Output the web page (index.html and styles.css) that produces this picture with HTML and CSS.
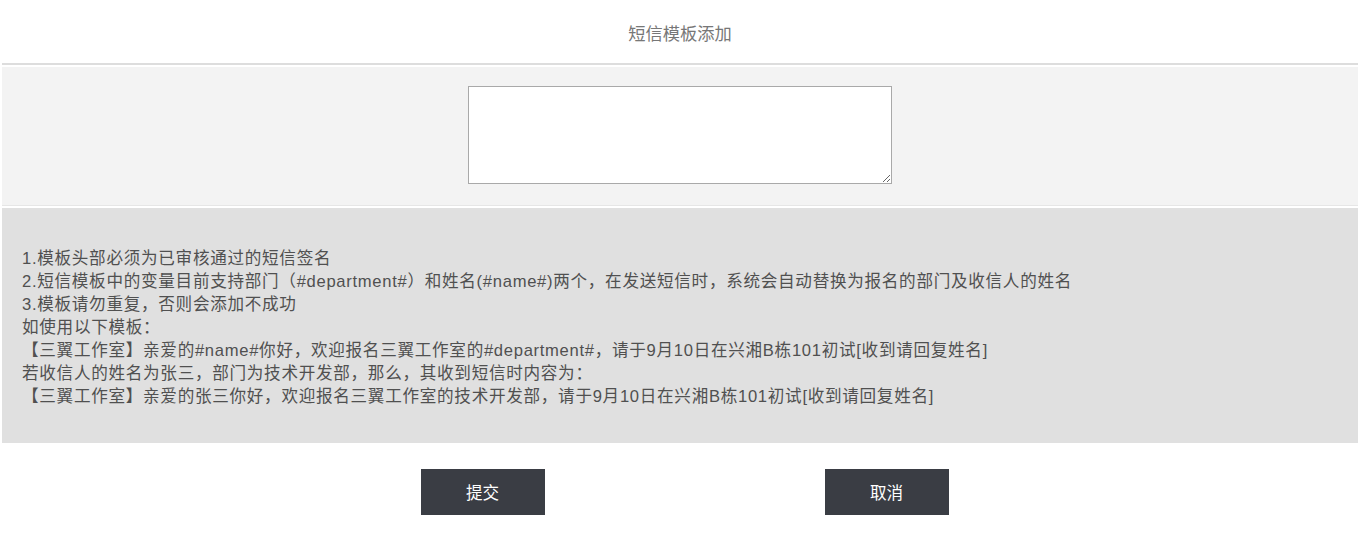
FILE: index.html
```html
<!DOCTYPE html>
<html lang="zh">
<head>
<meta charset="utf-8">
<title>短信模板添加</title>
<link rel="stylesheet" href="styles.css">
</head>
<body>
<div class="page">
  <header class="title-bar">
    <h1 class="title">短信模板添加</h1>
  </header>
  <section class="editor">
    <textarea class="tpl-input"></textarea>
  </section>
  <section class="notes">
    <p>1.模板头部必须为已审核通过的短信签名</p>
    <p>2.短信模板中的变量目前支持部门（#department#）和姓名(#name#)两个，在发送短信时，系统会自动替换为报名的部门及收信人的姓名</p>
    <p>3.模板请勿重复，否则会添加不成功</p>
    <p>如使用以下模板：</p>
    <p>【三翼工作室】亲爱的#name#你好，欢迎报名三翼工作室的#department#，请于9月10日在兴湘B栋101初试[收到请回复姓名]</p>
    <p>若收信人的姓名为张三，部门为技术开发部，那么，其收到短信时内容为：</p>
    <p>【三翼工作室】亲爱的张三你好，欢迎报名三翼工作室的技术开发部，请于9月10日在兴湘B栋101初试[收到请回复姓名]</p>
  </section>
  <div class="actions">
    <button class="btn" type="button">提交</button>
    <button class="btn" type="button">取消</button>
  </div>
</div>
</body>
</html>
```
FILE: styles.css
```css
html, body {
  margin: 0;
  padding: 0;
  background: #fff;
}
body {
  font-family: "Liberation Sans", "Noto Sans CJK SC", sans-serif;
  color: #555;
}
.page {
  padding: 0 3px 0 2px;
}
.title-bar {
  height: 63px;
  display: flex;
  align-items: center;
  justify-content: center;
  border-bottom: 2px solid #dddddd;
  margin-bottom: 2px;
}
.title {
  margin: 0;
  font-size: 17.3px;
  font-weight: normal;
  color: #777;
  padding-top: 2px;
}
.editor {
  background: #f3f3f3;
  display: flex;
  justify-content: center;
  padding: 19px 0 21px 0;
  border-bottom: 1px solid #e6e6e6;
  margin-bottom: 2px;
}
.tpl-input {
  width: 424px;
  height: 98px;
  box-sizing: border-box;
  border: 1px solid #a9a9a9;
  background: #fff;
  margin: 0 0 0 -1px;
  padding: 2px;
}
.notes {
  background: #e0e0e0;
  padding: 39px 20px 35px 20px;
  font-size: 16.6px;
  line-height: 23px;
  letter-spacing: 0.7px;
  color: #505050;
}
.notes p {
  margin: 0;
}
.actions {
  display: flex;
  justify-content: center;
  gap: 280px;
  padding: 26px 0 0 9px;
}
.btn {
  width: 124px;
  height: 46px;
  border: none;
  background: #3a3d44;
  color: #fff;
  font-family: "Liberation Sans", "Noto Sans CJK SC", sans-serif;
  font-size: 16.6px;
  padding: 0;
}
```
